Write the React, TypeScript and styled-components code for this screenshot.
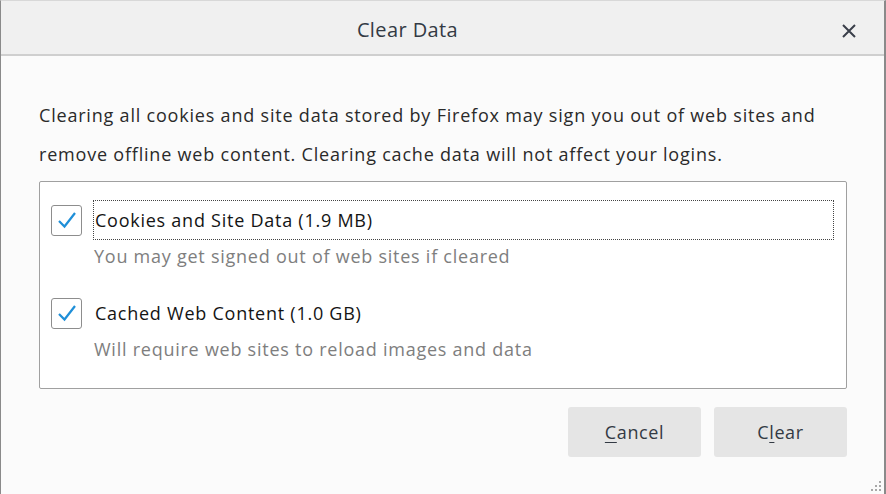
import styled, { createGlobalStyle } from 'styled-components';

const GlobalStyle = createGlobalStyle`
  html, body {
    margin: 0;
    padding: 0;
    background: #fbfbfb;
  }
  * {
    box-sizing: border-box;
  }
`;

const items = [
  {
    id: 'cookies',
    label: 'Cookies and Site Data (1.9 MB)',
    hint: 'You may get signed out of web sites if cleared',
    focused: true,
  },
  {
    id: 'cache',
    label: 'Cached Web Content (1.0 GB)',
    hint: 'Will require web sites to reload images and data',
    focused: false,
  },
];

const Check = () => (
  <svg width="20" height="18" viewBox="0 0 20 18">
    <path d="M2 10 L7.5 15.5 L18 2" fill="none" stroke="#1f8fd8" strokeWidth="2.2" />
  </svg>
);

const Grip = () => (
  <svg width="12" height="12" viewBox="0 0 12 12">
    {[
      [9, 1],
      [5, 5],
      [9, 5],
      [1, 9],
      [5, 9],
      [9, 9],
    ].map(([x, y]) => (
      <rect key={`${x}-${y}`} x={x} y={y} width="2" height="2" fill="#a8a8a8" />
    ))}
  </svg>
);

export default function App() {
  return (
    <>
      <GlobalStyle />
      <Window>
        <TitleBar>
          <Title>Clear Data</Title>
          <Close aria-label="Close">
            <svg width="16" height="16" viewBox="0 0 16 16">
              <path d="M2 2 L14 14 M14 2 L2 14" stroke="#3a3f4a" strokeWidth="2" />
            </svg>
          </Close>
        </TitleBar>
        <Body>
          <Intro>
            Clearing all cookies and site data stored by Firefox may sign you out of web sites and
            <br />
            remove offline web content. Clearing cache data will not affect your logins.
          </Intro>
          <Group>
            {items.map(item => (
              <Option key={item.id}>
                <Row>
                  <Box>
                    <Check />
                  </Box>
                  <Label focused={item.focused}>{item.label}</Label>
                </Row>
                <Hint>{item.hint}</Hint>
              </Option>
            ))}
          </Group>
          <Buttons>
            <Button>
              <u>C</u>ancel
            </Button>
            <Button>
              C<u>l</u>ear
            </Button>
          </Buttons>
        </Body>
        <GripSpot>
          <Grip />
        </GripSpot>
      </Window>
    </>
  );
}

const Window = styled.div`
  position: relative;
  width: 886px;
  height: 494px;
  border-left: 1px solid #8a8a8a;
  border-right: 2px solid #8a8a8a;
  border-top: 1px solid #d8d8d8;
  background: #fbfbfb;
  font-family: 'Open Sans', 'Noto Sans', sans-serif;
  color: #1a1a1a;
  display: flex;
  flex-direction: column;
`;

const TitleBar = styled.div`
  height: 55px;
  flex-shrink: 0;
  background: #f0f0f0;
  border-bottom: 2px solid #cfcfcf;
  display: flex;
  align-items: center;
  justify-content: center;
  position: relative;
  padding: 3px 70px 0 0;
`;

const Title = styled.div`
  font-size: 20px;
  color: #333a44;
  letter-spacing: 0.4px;
`;

const Close = styled.button`
  position: absolute;
  right: 26px;
  top: 21px;
  width: 18px;
  height: 18px;
  padding: 0;
  border: none;
  background: transparent;
  display: flex;
  align-items: center;
  justify-content: center;
`;

const Body = styled.div`
  padding: 40px 37px 0 38px;
  display: flex;
  flex-direction: column;
`;

const Intro = styled.p`
  margin: 0 0 7px;
  font-size: 18px;
  line-height: 39px;
  color: #2a2a2a;
  letter-spacing: 0.8px;
  white-space: nowrap;
`;

const Group = styled.div`
  border: 1px solid #a0a0a0;
  border-radius: 2px;
  background: #ffffff;
  padding: 18px 12px 0 11px;
  display: flex;
  flex-direction: column;
  gap: 25px;
  height: 208px;
  flex-shrink: 0;
`;

const Option = styled.div`
  display: flex;
  flex-direction: column;
`;

const Row = styled.div`
  display: flex;
  align-items: center;
  gap: 11px;
`;

const Box = styled.div`
  width: 31px;
  height: 31px;
  border: 1.5px solid #8d8d8d;
  border-radius: 3px;
  background: #ffffff;
  display: flex;
  align-items: center;
  justify-content: center;
  flex-shrink: 0;
`;

const Label = styled.div<{ focused: boolean }>`
  flex: 1;
  height: 40px;
  display: flex;
  align-items: center;
  padding-left: 1px;
  font-size: 18px;
  color: #141414;
  letter-spacing: 0.75px;
  border: 1.5px dotted ${props => (props.focused ? '#444' : 'transparent')};
`;

const Hint = styled.div`
  margin: 4px 0 0 43px;
  font-size: 18px;
  line-height: 24px;
  color: #7e7e7e;
  letter-spacing: 0.75px;
`;

const Buttons = styled.div`
  display: flex;
  justify-content: flex-end;
  gap: 13px;
  margin-top: 18px;
`;

const Button = styled.button`
  width: 133px;
  height: 50px;
  border: none;
  border-radius: 3px;
  background: #e5e5e5;
  font-family: 'Open Sans', 'Noto Sans', sans-serif;
  font-size: 18px;
  color: #333a44;
  letter-spacing: 0.6px;
  padding: 0;

  u {
    text-decoration-thickness: 1px;
    text-underline-offset: 3px;
  }
`;

const GripSpot = styled.div`
  position: absolute;
  right: 2px;
  bottom: 2px;
  line-height: 0;
`;
